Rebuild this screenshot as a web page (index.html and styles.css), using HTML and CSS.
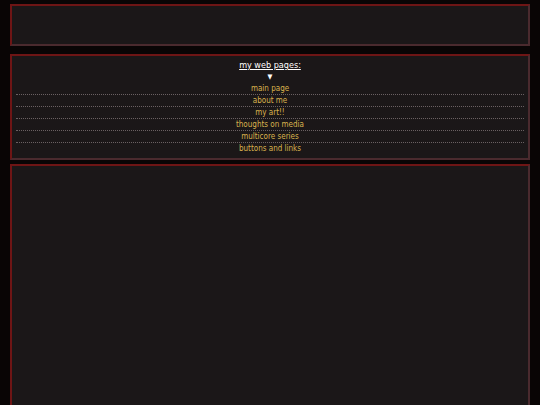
FILE: index.html
```html
<!DOCTYPE html>
<html>
<head>
<meta charset="utf-8">
<link rel="stylesheet" href="styles.css">
</head>
<body>
<div class="page">
  <header class="box header"></header>
  <nav class="box nav">
    <div class="nav-title">my web pages:</div>
    <div class="nav-arrow">▼</div>
    <ul class="nav-list">
      <li><a href="#">main page</a></li>
      <li><a href="#">about me</a></li>
      <li><a href="#">my art!!</a></li>
      <li><a href="#">thoughts on media</a></li>
      <li><a href="#">multicore series</a></li>
      <li><a href="#">buttons and links</a></li>
    </ul>
  </nav>
  <main class="box content"></main>
</div>
</body>
</html>
```
FILE: styles.css
```css
html, body {
  margin: 0;
  padding: 0;
  background: #090505;
  font-family: "DejaVu Sans Condensed", "DejaVu Sans", sans-serif;
  font-size: 8px;
  color: #ffffff;
}
.page {
  display: flex;
  flex-direction: column;
  padding: 4px 10px 0 10px;
}
.box {
  background: #1b1718;
  border-style: solid;
  border-width: 2px;
  border-color: #6e1515 #4a2a2e #4a2a2e #6e1515;
  box-sizing: border-box;
}
.header {
  height: 42px;
}
.nav {
  margin-top: 8px;
  height: 106px;
  padding: 3px 4px 0 4px;
  display: flex;
  flex-direction: column;
  align-items: stretch;
  text-align: center;
}
.nav-title {
  text-decoration: underline;
  font-size: 9px;
  line-height: 12px;
  color: #ffffff;
}
.nav-arrow {
  font-size: 7px;
  line-height: 12px;
  color: #ffffff;
}
.nav-list {
  list-style: none;
  margin: 0;
  padding: 0;
}
.nav-list li {
  height: 11px;
  line-height: 12px;
  border-bottom: 1px dotted #6a6062;
}
.nav-list li:last-child {
  border-bottom: none;
}
.nav-list a {
  color: #dab34e;
  text-decoration: none;
}
.content {
  margin-top: 4px;
  height: 245px;
}
```
